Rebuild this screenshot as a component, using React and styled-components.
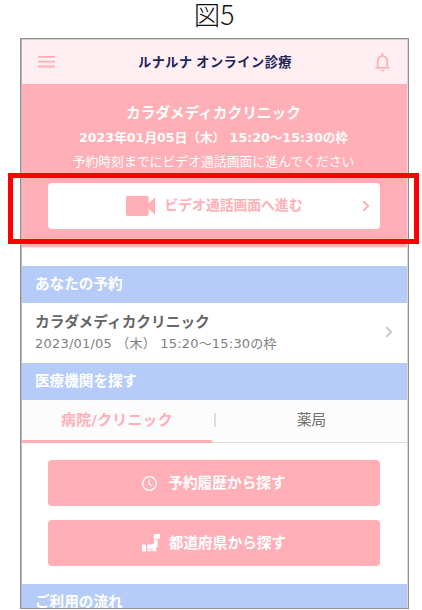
import React from "react";
import styled, { createGlobalStyle } from "styled-components";

const pink = "#ffafb5";
const blue = "#b5ccf9";

const GlobalStyle = createGlobalStyle`
  * { box-sizing: border-box; }
  body {
    margin: 0;
    background: #fff;
    font-family: "DejaVu Sans", "Noto Sans CJK JP", sans-serif;
  }
`;

const StyledFigure = styled.div`
  position: relative;
  width: 422px;
  height: 610px;
`;
const StyledCaption = styled.h1`
  margin: 0;
  height: 38px;
  padding: 0 0 9px 6px;
  display: flex;
  align-items: center;
  justify-content: center;
  color: #111;
  font-family: "Noto Sans CJK JP", sans-serif;
  font-size: 26.5px;
  font-weight: 300;
  line-height: 1;
`;
const StyledScreen = styled.div`
  width: 389px;
  height: 571px;
  margin-left: 20px;
  border: 1px solid #8f8f8f;
  box-shadow: inset 1px 0 #b9b9b9, inset -1px 0 #d8d8d8, inset 0 1px #d2cccd;
  padding: 1px 1px 0;
  overflow: hidden;
`;
const StyledHeader = styled.header`
  height: 44px;
  padding: 0 17px 0 16px;
  display: flex;
  align-items: center;
  justify-content: space-between;
  background: #ffeff2;
`;
const StyledLogo = styled.div`
  & > div {
    font-family: "Noto Sans CJK JP", sans-serif;
  }
`;
const StyledLine = styled.div`
  font-size: ${(props) => props.$size}px;
  font-weight: ${(props) => (props.$bold ? 700 : 400)};
  line-height: ${(props) => props.$height || 24}px;
  letter-spacing: ${(props) => props.$spacing || 0}px;
  color: ${(props) => props.$color || "#fff"};
  white-space: pre;
`;
const StyledPromo = styled.section`
  height: 163px;
  padding: 16px 27px 0 25px;
  display: flex;
  flex-direction: column;
  align-items: center;
  background: ${pink};
  box-shadow: 0 1px 1px #ffe6e8;
`;
const StyledButton = styled.button`
  width: 332px;
  height: 46px;
  margin: ${(props) => props.$margin || 0};
  padding: 0;
  border: 0;
  border-radius: 4px;
  display: flex;
  align-items: center;
  justify-content: center;
  gap: ${(props) => props.$gap}px;
  background: ${(props) => (props.$outline ? "#fff" : pink)};
  font-family: inherit;
`;
const StyledCallButton = styled(StyledButton)`
  justify-content: flex-start;
  padding: 0 10px 2px 78px;

  & > svg {
    margin-top: 2px;
  }
  & > svg:last-child {
    margin-left: auto;
  }
`;
const StyledHeading = styled.h2`
  height: 37px;
  margin: ${(props) => props.$top || 0}px 0 0;
  padding: 0 0 2px 13px;
  display: flex;
  align-items: center;
  background: ${blue};
`;
const StyledReservation = styled.div`
  height: 60px;
  padding: 0 14px 2px 13px;
  display: flex;
  align-items: center;
  justify-content: space-between;
`;
const StyledTabs = styled.div`
  height: 43px;
  display: flex;
  background: #fcfcfc;
`;
const StyledTab = styled.div`
  flex: ${(props) => (props.$active ? "0 0 190px" : "1")};
  display: flex;
  align-items: center;
  justify-content: center;
  padding-right: ${(props) => (props.$active ? 0 : 1)}px;
  padding-bottom: ${(props) => (props.$active ? 0 : 2)}px;
  border-bottom: ${(props) => (props.$active ? `3px solid ${pink}` : "1px solid #ddd")};
`;
const StyledDivider = styled.div`
  width: 5px;
  padding: 13px 0 0 2px;
  border-bottom: 1px solid #ddd;

  &::before {
    content: "";
    display: block;
    width: 2px;
    height: 14px;
    background: #ddd;
  }
`;
const StyledActions = styled.div`
  height: 141px;
  padding: 17px 0 0 26px;
`;
const StyledHighlight = styled.div`
  position: absolute;
  left: 8px;
  top: 173px;
  width: 411px;
  height: 71px;
  border: 5px solid #f00;
`;

const MenuIcon = () => (
  <svg width="17" height="12" viewBox="0 0 17 12" fill={pink}>
    <path d="M0 0h17v1.8H0zM0 4.8h17v1.8H0zM0 9.6h17v1.8H0z" />
  </svg>
);

const BellIcon = () => (
  <svg width="15" height="19" viewBox="0 0 15 19" fill="none" stroke={pink}>
    <path d="M2.7 14.5V8.6C2.7 5.2 4.6 3.1 7.5 3.1s4.8 2.1 4.8 5.5v5.9" strokeWidth="1.7" />
    <path d="M.4 14.8h14.2" strokeWidth="1.6" />
    <path d="M7.5 1v2" strokeWidth="2.2" strokeLinecap="round" />
    <path d="M5.5 16.7h4a2 1.7 0 0 1-4 0z" fill={pink} stroke="none" />
  </svg>
);

const VideoIcon = () => (
  <svg width="29" height="20" viewBox="0 0 29 20" fill={pink}>
    <path d="M1.4 0h19.8q1.4 0 1.4 1.4v6.2L29 1.3v17.4l-6.4-6.2v6.1q0 1.4-1.4 1.4H1.4Q0 20 0 18.6V1.4Q0 0 1.4 0z" />
  </svg>
);

const Chevron = ({ color }) => (
  <svg width="8" height="12" viewBox="0 0 8 12" fill="none" stroke={color} strokeWidth="1.9">
    <path d="M1.3 1.2 6.2 6l-4.9 4.8" />
  </svg>
);

const ClockIcon = () => (
  <svg width="15" height="15" viewBox="0 0 15 15" fill="none" stroke="#fff">
    <circle cx="7.5" cy="7.5" r="6.8" strokeWidth="1.3" />
    <path d="M7 3.5v4.3l3.1 2" strokeWidth="1.2" />
  </svg>
);

const JapanIcon = () => (
  <svg width="18" height="18" viewBox="0 0 18 18" fill="#fff">
    <path d="M11.7 0H18v4.8h-6.3zM12 5.6h3.6v7.3h-1.4v4.3h-3.8v-2.4H5.2V10.4h5.2V9.7H12z" />
    <path d="M0 10.4h4v7.2H0zM5.2 15.4h4.2v1.9H5.2z" />
  </svg>
);

const App = () => (
  <StyledFigure>
    <GlobalStyle />
    <StyledCaption>図5</StyledCaption>
    <StyledScreen>
      <StyledHeader>
        <MenuIcon />
        <StyledLogo>
          <StyledLine $size={13.2} $bold $spacing={0.5} $color="#1c2458">
            ルナルナ オンライン診療
          </StyledLine>
        </StyledLogo>
        <BellIcon />
      </StyledHeader>
      <StyledPromo>
        <StyledLine $size={14.7} $bold $height={25}>カラダメディカクリニック</StyledLine>
        <StyledLine $size={12.65} $bold $height={25}>2023年01月05日（木） 15:20～15:30の枠</StyledLine>
        <StyledLine $size={12.85} $height={24}>予約時刻までにビデオ通話画面に進んでください</StyledLine>
        <StyledCallButton $outline $gap={10} $margin="9px 0 0">
          <VideoIcon />
          <StyledLine $size={13.8} $bold $color={pink}>ビデオ通話画面へ進む</StyledLine>
          <Chevron color={pink} />
        </StyledCallButton>
      </StyledPromo>
      <StyledHeading $top={19}>
        <StyledLine $size={14.6} $bold>あなたの予約</StyledLine>
      </StyledHeading>
      <StyledReservation>
        <div>
          <StyledLine $size={14.7} $bold $height={22} $color="#666">カラダメディカクリニック</StyledLine>
          <StyledLine $size={13} $height={21} $spacing={0.2} $color="#808080">2023/01/05 （木） 15:20～15:30の枠</StyledLine>
        </div>
        <Chevron color="#c8c8c8" />
      </StyledReservation>
      <StyledHeading>
        <StyledLine $size={14.6} $bold>医療機関を探す</StyledLine>
      </StyledHeading>
      <StyledTabs>
        <StyledTab $active>
          <StyledLine $size={14.8} $bold $spacing={0.35} $color={pink}>病院/クリニック</StyledLine>
        </StyledTab>
        <StyledDivider />
        <StyledTab>
          <StyledLine $size={14.6} $color="#707070">薬局</StyledLine>
        </StyledTab>
      </StyledTabs>
      <StyledActions>
        <StyledButton $gap={11}>
          <ClockIcon />
          <StyledLine $size={14.7} $bold>予約履歴から探す</StyledLine>
        </StyledButton>
        <StyledButton $gap={9} $margin="14px 0 0">
          <JapanIcon />
          <StyledLine $size={14.7} $bold>都道府県から探す</StyledLine>
        </StyledButton>
      </StyledActions>
      <StyledHeading>
        <StyledLine $size={14.6} $bold>ご利用の流れ</StyledLine>
      </StyledHeading>
    </StyledScreen>
    <StyledHighlight />
  </StyledFigure>
);

export default App;
